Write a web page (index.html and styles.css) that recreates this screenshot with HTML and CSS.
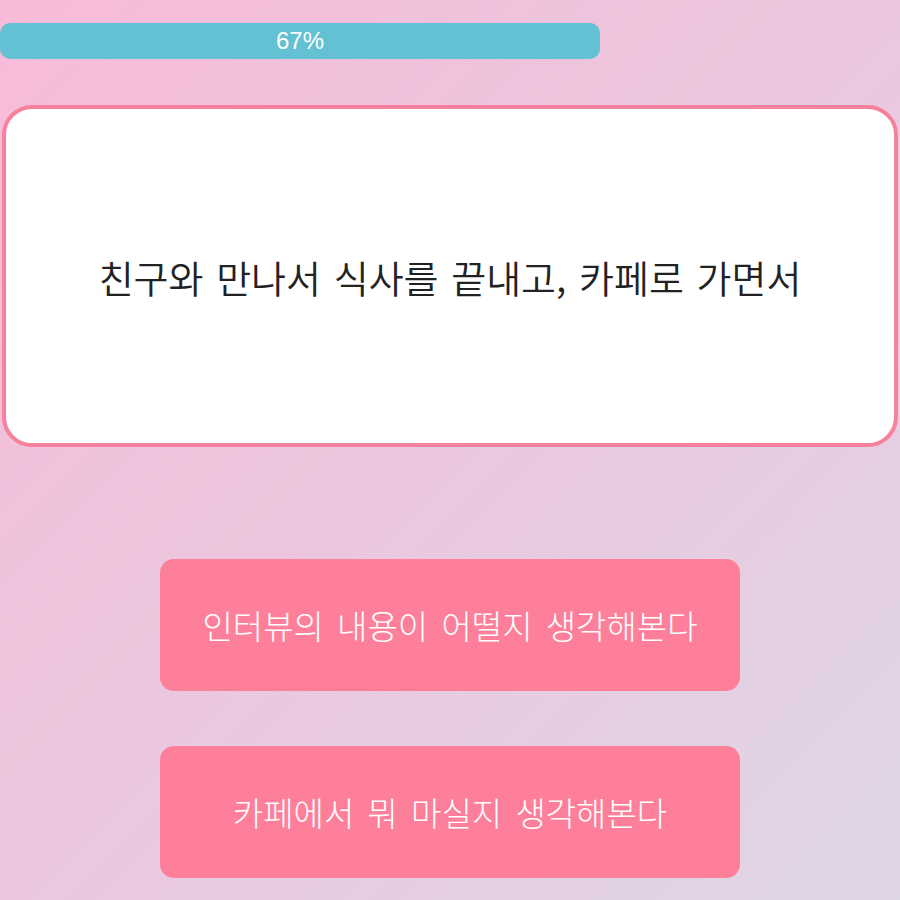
FILE: index.html
```html
<!DOCTYPE html>
<html lang="ko">
<head>
  <meta charset="UTF-8">
  <title>Quiz</title>
  <link rel="stylesheet" href="styles.css">
</head>
<body>

  <div class="page">
    <div class="progress">
      <div class="progress-fill" style="width: 600px;">67%</div>
    </div>

    <div class="question-box">
      <p>친구와 만나서 식사를 끝내고, 카페로 가면서</p>
    </div>

    <div class="answers">
      <button class="answer-btn">인터뷰의 내용이 어떨지 생각해본다</button>
      <button class="answer-btn">카페에서 뭐 마실지 생각해본다</button>
    </div>
  </div>

</body>
</html>
```

FILE: styles.css
```css
html, body {
  margin: 0;
  padding: 0;
}

body {
  font-family: "Noto Sans CJK KR", "Noto Sans", sans-serif;
  background: linear-gradient(135deg, #f8bbd9 0%, #ecc6de 45%, #dfd6e6 100%);
  min-height: 900px;
}

.page {
  padding-top: 23px;
}

.progress {
  width: 900px;
}

.progress-fill {
  height: 36px;
  background: #63c1d3;
  border-radius: 10px;
  color: white;
  font-family: "Liberation Sans", Arial, sans-serif;
  font-size: 24px;
  line-height: 36px;
  text-align: center;
}

.question-box {
  margin: 46px 2px 0;
  height: 334px;
  background: white;
  border: 4px solid #f7809a;
  border-radius: 30px;
  display: flex;
  align-items: center;
  justify-content: center;
}

.question-box p {
  margin: 0;
  font-size: 38px;
  font-weight: 350;
  word-spacing: 2px;
  color: #222;
}

.answers {
  display: flex;
  flex-direction: column;
  align-items: center;
  gap: 55px;
  margin-top: 112px;
}

.answer-btn {
  width: 580px;
  height: 132px;
  background: #fe7f9a;
  border: none;
  border-radius: 14px;
  color: white;
  font-family: inherit;
  font-size: 33px;
  font-weight: 300;
  word-spacing: 4px;
  cursor: pointer;
}
```
